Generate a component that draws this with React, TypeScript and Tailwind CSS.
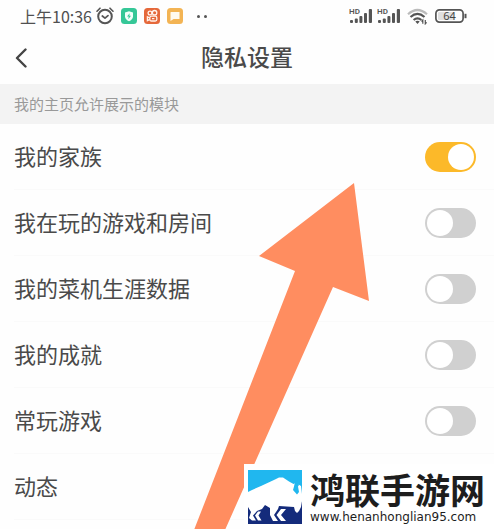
import { useState } from 'react'

const modules = [
  { id: 'family', label: '我的家族', enabled: true },
  { id: 'rooms', label: '我在玩的游戏和房间', enabled: false },
  { id: 'career', label: '我的菜机生涯数据', enabled: false },
  { id: 'achievements', label: '我的成就', enabled: false },
  { id: 'games', label: '常玩游戏', enabled: false },
  { id: 'moments', label: '动态', enabled: false }
]

const AlarmIcon = () => (
  <svg viewBox="0 0 18 18" className="h-[18px] w-[18px]" fill="none" stroke="#555" strokeWidth="2" strokeLinecap="round" strokeLinejoin="round">
    <circle cx="9" cy="9.5" r="6.8" />
    <path d="M6.3 9 9 11.2l3-2.6" strokeWidth="1.7" />
    <path d="M1 4.2 4 1.2M17 4.2l-3-3" strokeWidth="1.6" />
  </svg>
)

const ShieldIcon = () => (
  <svg viewBox="0 0 16 16" className="h-4 w-4">
    <rect width="16" height="16" rx="3.5" fill="#35c797" />
    <path d="M8 3.2 12 4.6v3.6c0 2.4-1.8 4-4 5-2.2-1-4-2.6-4-5V4.6Z" fill="#f2fffa" />
    <path d="M8.7 5.2 6 8.6h1.7l-.4 2.6L10 7.7H8.3Z" fill="#35c797" />
  </svg>
)

const CameraIcon = () => (
  <svg viewBox="0 0 16 16" className="h-4 w-4">
    <rect width="16" height="16" rx="3.5" fill="#e5683a" />
    <g fill="none" stroke="#fff3ec" strokeWidth="1.3">
      <circle cx="6" cy="5" r="1.9" />
      <circle cx="10.6" cy="4.7" r="2.2" />
      <rect x="5.8" y="8.2" width="7" height="4.8" rx="1.5" />
      <path d="M5.8 10 3.4 8.8v3.8l2.4-1.2M8 10.6h2.4" />
    </g>
  </svg>
)

const MessageIcon = () => (
  <svg viewBox="0 0 16 16" className="h-4 w-4">
    <rect width="16" height="16" rx="3.5" fill="#f3b454" />
    <path d="M4 4h8.5v7H6.6L3.5 13V4.5Q3.5 4 4 4Z" fill="#fffaf0" />
  </svg>
)

const SignalIcon = () => (
  <svg viewBox="0 0 24 16" className="h-4 w-6" fill="#555">
    <text x="0" y="6" fontSize="8" fontWeight="600" fontFamily="Roboto, sans-serif">HD</text>
    <rect x="1" y="12" width="3" height="3" rx="1" />
    <rect x="5.8" y="10.5" width="3" height="4.5" rx="1" />
    <rect x="10.4" y="8" width="3" height="7" rx="1" />
    <rect x="15" y="5" width="3" height="10" rx="1" />
    <rect x="19.8" y="1" width="3.2" height="14" rx="1" />
  </svg>
)

const WifiIcon = () => (
  <svg viewBox="0 0 22 17" className="h-[17px] w-[22px]" fill="none" strokeWidth="2.2">
    <path d="M1 6.2Q10.5-2.2 20 6.2" stroke="#bbb" />
    <path d="M3.5 9q7-6.2 14 0M6.6 12q3.9-3.4 7.8 0" stroke="#555" />
    <path d="M8.3 13.5q2.2-1.4 4.4 0l-2.2 2.6Z" fill="#555" />
    <path d="M15.8 15.8V12l-1.3 1.5M18.3 12v3.8l1.3-1.5" stroke="#555" strokeWidth="1.2" />
  </svg>
)

const BatteryIcon = () => (
  <svg viewBox="0 0 32 14" className="h-[14px] w-8">
    <rect x=".9" y=".9" width="27.2" height="12.2" rx="3.5" fill="none" stroke="#555" strokeWidth="1.7" />
    <rect x="3" y="3" width="16" height="8" rx="1" fill="#e0e0e0" />
    <path d="M30.5 4.8v4.4" stroke="#555" strokeWidth="2" />
    <text x="14.5" y="11" fontSize="11" textAnchor="middle" fill="#444" fontFamily="'Noto Sans', sans-serif">64</text>
  </svg>
)

const BisonLogo = () => (
  <svg viewBox="0 0 54 54" className="h-[54px] w-[54px] shrink-0">
    <rect width="54" height="54" fill="#20b7ef" />
    <path d="M0 32h54v22H0Z" fill="#142b7b" />
    {/* Body with both legs */}
    <path
      d="M0 22 4 20 13 16 27 9.5 31 7.5H35L41 11.5 45.500 14 48 13 53 16 54 24V31L53 37 51 41 49 43 47 41 46 37 31 36 30 39 26 45 30 51H25L22 45 22 38 17 35 14 39 9 41 5 45.500 8 50.500H4L1 48 3 42 0 37Z"
      fill="#fff"
    />
    {/* Horn */}
    <path d="M49.5 10.5Q46.500 12 46 16.500L45 20 49 24.500 51 22 50 16.500 51 15Z" fill="#20b7ef" />
    {/* Hooves */}
    <path d="M13 41.500H10L7 45.500 10 50.500H13.500L10.500 45.500ZM38 39H33L28.500 45 33 51H38L33 45Z" fill="#fff" />
  </svg>
)

const App = () => {
  const [items, setItems] = useState(modules)

  const toggle = (id: string) => {
    setItems(items.map((item) => (item.id === id ? { ...item, enabled: !item.enabled } : item)))
  }

  return (
    <div className="relative min-h-screen overflow-hidden bg-[#fefefe] font-['Noto_Sans_CJK_SC',sans-serif] text-[#4a4a4a]">
      {/* Status bar */}
      <div className="flex h-8 items-center justify-between pr-[27px] pl-5">
        <div className="flex items-center">
          <span className="text-base text-[#505050]">上午10:36</span>
          <div className="ml-1 flex items-center gap-[7px]">
            <AlarmIcon />
            <ShieldIcon />
            <CameraIcon />
            <MessageIcon />
          </div>
          <div className="ml-[14px] flex gap-1">
            <span className="h-[3px] w-[3px] rounded-full bg-[#555]" />
            <span className="h-[3px] w-[3px] rounded-full bg-[#555]" />
          </div>
        </div>
        <div className="flex items-center">
          <div className="flex gap-1">
            <SignalIcon />
            <SignalIcon />
          </div>
          <div className="ml-[6px] flex items-center gap-[6px]">
            <WifiIcon />
            <BatteryIcon />
          </div>
        </div>
      </div>

      {/* Title bar */}
      <header className="grid h-[52px] grid-cols-[40px_1fr_40px] items-center">
        <button type="button" aria-label="返回" className="flex h-10 items-center pl-[15px]">
          <svg viewBox="0 0 12 20" className="h-5 w-3" fill="none" stroke="#444" strokeWidth="2.4" strokeLinecap="round" strokeLinejoin="round">
            <path d="M10.5 1.5 2 10l8.5 8.5" />
          </svg>
        </button>
        <h1 className="pb-1 text-center text-[23px] leading-8 font-medium">隐私设置</h1>
      </header>

      <h2 className="bg-[#f3f3f3] px-[14px] text-[15px] leading-[40px] text-[#999]">我的主页允许展示的模块</h2>

      {/* Module switches */}
      <ul>
        {items.map((item) => (
          <li key={item.id} className="ml-[14px] border-b border-[#fafafa]">
            <label htmlFor={item.id} className="flex h-[65px] items-center justify-between pr-[18px]">
              <span className="pb-1 text-[22px] leading-8">{item.label}</span>
              <input
                id={item.id}
                type="checkbox"
                role="switch"
                checked={item.enabled}
                onChange={() => toggle(item.id)}
                className="flex h-[30px] w-[51px] appearance-none items-center rounded-full bg-[#d0d0d0] px-[2px] before:h-[26px] before:w-[26px] before:rounded-full before:bg-white checked:justify-end checked:bg-[#fcb929]"
              />
            </label>
          </li>
        ))}
      </ul>

      {/* Pointer over the first switch */}
      <svg viewBox="0 0 176 347" className="pointer-events-none absolute top-[183px] left-[194px] h-[347px] w-[176px]">
        <path d="M160 0 65 73l36 15L0 347h31l108-243 36 14Z" fill="#ff8d60" />
      </svg>

      {/* Site mark */}
      <div className="absolute right-0 bottom-0 flex h-[65px] w-[250px] items-center bg-white pl-1 text-[#1d1d1d]">
        <BisonLogo />
        <div className="ml-2 whitespace-nowrap">
          <p className="text-[35px] leading-[40px] font-bold">鸿联手游网</p>
          <p className="font-['DejaVu_Sans',sans-serif] text-xs leading-4">www.henanhonglian95.com</p>
        </div>
      </div>
    </div>
  )
}

export default App
